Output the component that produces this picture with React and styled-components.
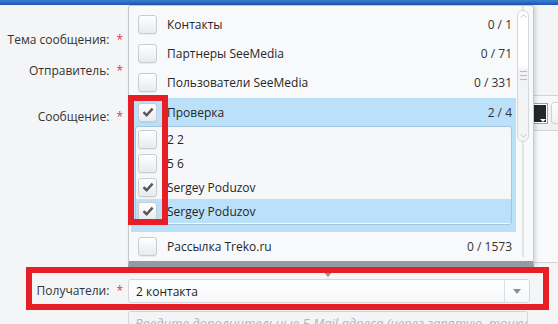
import React from 'react';
import styled, { createGlobalStyle } from 'styled-components';

const GlobalStyle = createGlobalStyle`
  body {
    margin: 0;
    background: #f4f5f7;
    font-family: "Open Sans", "Noto Sans", sans-serif;
    font-size: 12px;
    color: #2b2b2b;
    overflow: hidden;
  }
`;

const Page = styled.div`
  position: relative;
  width: 558px;
  height: 324px;
  overflow: hidden;
`;

const TopBar = styled.div`
  height: 5px;
  background: linear-gradient(#3b80d6, #1b57ac);
`;

const Form = styled.div`
  display: flex;
  flex-direction: column;
  padding-top: 23px;
`;

const FormRow = styled.div`
  display: flex;
  align-items: ${(p) => (p.$top ? 'flex-start' : 'center')};
  margin-top: ${(p) => p.$gap || 0}px;
`;

const Label = styled.label`
  width: 128px;
  flex: none;
  box-sizing: border-box;
  padding-right: 5px;
  padding-top: ${(p) => p.$pad || 0}px;
  display: flex;
  justify-content: flex-end;
  gap: 7px;
  line-height: 18px;
  color: #333;
`;

const Star = styled.span`
  color: #e03a3e;
`;

const Input = styled.div`
  width: ${(p) => p.$w || 400}px;
  flex: none;
  height: 24px;
  box-sizing: border-box;
  border: 1px solid #d3d6da;
  border-radius: 3px;
  background: ${(p) => (p.$muted ? '#f3f4f6' : '#fff')};
  display: flex;
  align-items: center;
  padding-left: 6px;
  overflow: hidden;
  white-space: nowrap;
`;

const Placeholder = styled.span`
  min-width: 0;
  overflow: hidden;
  color: #b3b6bb;
  font-style: italic;
  font-size: 13px;
`;

const Combo = styled(Input)`
  padding-left: 0;
  background: linear-gradient(#ffffff, #f7f8f9);
`;

const ComboText = styled.span`
  flex: 1;
  padding-left: 7px;
  color: #222;
`;

const ComboButton = styled.span`
  width: 24px;
  height: 100%;
  border-left: 1px solid #dcdee1;
  display: flex;
  align-items: center;
  justify-content: center;
  &::after {
    content: '';
    border-left: 4px solid transparent;
    border-right: 4px solid transparent;
    border-top: 5px solid #8a8d92;
  }
`;

const Editor = styled.div`
  width: 450px;
  flex: none;
  height: 168px;
  box-sizing: border-box;
  border: 1px solid #d0d3d7;
  border-radius: 3px;
  background: #f9fafb;
`;

const Toolbar = styled.div`
  height: 35px;
  box-sizing: border-box;
  border-bottom: 1px solid #d3d6da;
  background: linear-gradient(#f7f8f9, #eef0f2);
  display: flex;
  align-items: center;
  justify-content: flex-end;
  gap: 3px;
  padding-right: 6px;
`;

const Swatch = styled.span`
  position: relative;
  width: 16px;
  height: 21px;
  box-sizing: border-box;
  border: 1px solid #9ea2a7;
  box-shadow: inset 0 0 0 1px #fff;
  background: #24272b;
  &::after {
    content: '';
    position: absolute;
    right: 1px;
    bottom: 1px;
    border-left: 3px solid transparent;
    border-right: 3px solid transparent;
    border-top: 3px solid #fff;
  }
`;

const ToolButton = styled.span`
  width: 20px;
  height: 22px;
  box-sizing: border-box;
  border: 1px solid #cfd2d6;
  border-radius: 3px;
  background: linear-gradient(#fff, #eef0f2);
`;

/* dropdown over the form */
const Panel = styled.div`
  position: absolute;
  left: 128px;
  top: 5px;
  width: 406px;
  height: 262px;
  box-sizing: border-box;
  border: 1px solid #c4c7cb;
  border-bottom: 6px solid #959ba3;
  border-radius: 3px 3px 0 0;
  background: #f8f9fb;
  box-shadow: 2px 0 4px rgba(0, 0, 0, 0.14);
  z-index: 2;
`;

const List = styled.div`
  height: 100%;
  overflow: hidden;
  padding-top: 4px;
  box-sizing: border-box;
`;

const Row = styled.div`
  display: flex;
  align-items: center;
  height: ${(p) => p.$h || 29}px;
  padding: 0 ${(p) => p.$pr ?? 21}px 0 ${(p) => p.$pl ?? 9}px;
  background: ${(p) => (p.$active ? '#bbe0fa' : 'transparent')};
  color: #262626;
`;

const RowText = styled.span`
  flex: 1;
  margin-left: 10px;
  white-space: nowrap;
`;

const Count = styled.span`
  color: #333;
`;

const Group = styled.div`
  margin: 1px 17px 0 2px;
  padding: 0 4px 7px;
  background: #bbe0fa;
`;

const SubList = styled.div`
  border: 1px solid #a8c3dc;
  border-radius: 3px;
  background: #f6f7f9;
  padding-bottom: 1px;
`;

const Box = styled.span`
  width: 19px;
  height: 19px;
  flex: none;
  box-sizing: border-box;
  border: 1px solid #c8cbcf;
  border-radius: 3px;
  background: linear-gradient(#ffffff, #e8eaec);
  box-shadow: 0 1px 0 rgba(0, 0, 0, 0.05);
  display: flex;
  align-items: center;
  justify-content: center;
`;

const Scrollbar = styled.div`
  position: absolute;
  right: 4px;
  top: 0;
  bottom: 0;
  width: 12px;
  display: flex;
  justify-content: center;
  &::before {
    content: '';
    position: absolute;
    top: 0;
    bottom: 4px;
    width: 2px;
    background: #e3e5e8;
  }
`;

const Thumb = styled.div`
  position: relative;
  margin-top: 4px;
  width: 12px;
  height: 132px;
  box-sizing: border-box;
  border: 1px solid #d3d6da;
  border-radius: 6px;
  background: linear-gradient(#ffffff 0%, #ffffff 42%, #f1f2f4 46%, #f4f5f7 100%);
  display: flex;
  flex-direction: column;
  align-items: center;
  justify-content: space-between;
  padding: 3px 0;
`;

const Grip = styled.div`
  width: 7px;
  height: 10px;
  background: repeating-linear-gradient(#b9bdc2 0 1px, transparent 1px 4px);
`;

const Pointer = styled.div`
  position: absolute;
  left: 322px;
  top: 270px;
  border-left: 6px solid transparent;
  border-right: 6px solid transparent;
  border-top: 7px solid #8e959c;
  z-index: 2;
`;

const Highlight = styled.div`
  position: absolute;
  left: ${(p) => p.$x}px;
  top: ${(p) => p.$y}px;
  width: ${(p) => p.$w}px;
  height: ${(p) => p.$h}px;
  box-sizing: border-box;
  border: 6px solid #e81e27;
  z-index: 3;
`;

function Check() {
  return (
    <svg width="12" height="10" viewBox="0 0 12 10">
      <path d="M1.5 5.2 L4.6 8.2 L10.6 1.6" fill="none" stroke="#545759" strokeWidth="2.4" />
    </svg>
  );
}

function Chevron({ up }) {
  return (
    <svg width="7" height="4" viewBox="0 0 7 4">
      <path d={up ? 'M0.5 3.5 L3.5 0.8 L6.5 3.5' : 'M0.5 0.5 L3.5 3.2 L6.5 0.5'} fill="none" stroke="#c3c6ca" strokeWidth="1" />
    </svg>
  );
}

function Item({ label, count, checked, active, sub }) {
  return (
    <Row $active={active} $h={sub ? 24 : 29} $pl={sub ? 2 : undefined} $pr={sub ? 2 : undefined}>
      <Box>{checked && <Check />}</Box>
      <RowText>{label}</RowText>
      {count && <Count>{count}</Count>}
    </Row>
  );
}

const top = [
  ['Контакты', '0 / 1'],
  ['Партнеры SeeMedia', '0 / 71'],
  ['Пользователи SeeMedia', '0 / 331'],
];

const members = [
  { name: '2 2' },
  { name: '5 6' },
  { name: 'Sergey Poduzov', checked: true },
  { name: 'Sergey Poduzov', checked: true, active: true },
];

export default function App() {
  return (
    <Page>
      <GlobalStyle />
      <TopBar />
      <Form>
        <FormRow>
          <Label>Тема сообщения:<Star>*</Star></Label>
          <Input />
        </FormRow>
        <FormRow $gap={7}>
          <Label>Отправитель:<Star>*</Star></Label>
          <Input />
        </FormRow>
        <FormRow $gap={12} $top>
          <Label $pad={13}>Сообщение:<Star>*</Star></Label>
          <Editor>
            <Toolbar>
              <Swatch />
              <ToolButton />
            </Toolbar>
          </Editor>
        </FormRow>
        <FormRow $gap={16}>
          <Label>Получатели:<Star>*</Star></Label>
          <Combo $w={402}>
            <ComboText>2 контакта</ComboText>
            <ComboButton />
          </Combo>
        </FormRow>
        <FormRow $gap={8}>
          <Label />
          <Input $muted>
            <Placeholder>Введите дополнительные E-Mail адреса (через запятую, точку с запятой или пробел)</Placeholder>
          </Input>
        </FormRow>
      </Form>

      <Panel>
        <List>
          {top.map(([label, count]) => (
            <Item key={label} label={label} count={count} />
          ))}
          <Group>
            <Row $active $h={28} $pl={3} $pr={0}>
              <Box><Check /></Box>
              <RowText>Проверка</RowText>
              <Count>2 / 4</Count>
            </Row>
            <SubList>
              {members.map((m, i) => (
                <Item key={i} label={m.name} checked={m.checked} active={m.active} sub />
              ))}
            </SubList>
          </Group>
          <Item label="Рассылка Treko.ru" count="0 / 1573" />
        </List>
        <Scrollbar>
          <Thumb>
            <Chevron up />
            <Grip />
            <Chevron />
          </Thumb>
        </Scrollbar>
      </Panel>
      <Pointer />

      <Highlight $x={128} $y={95} $w={40} $h={130} />
      <Highlight $x={26} $y={267} $w={523} $h={43} />
    </Page>
  );
}
